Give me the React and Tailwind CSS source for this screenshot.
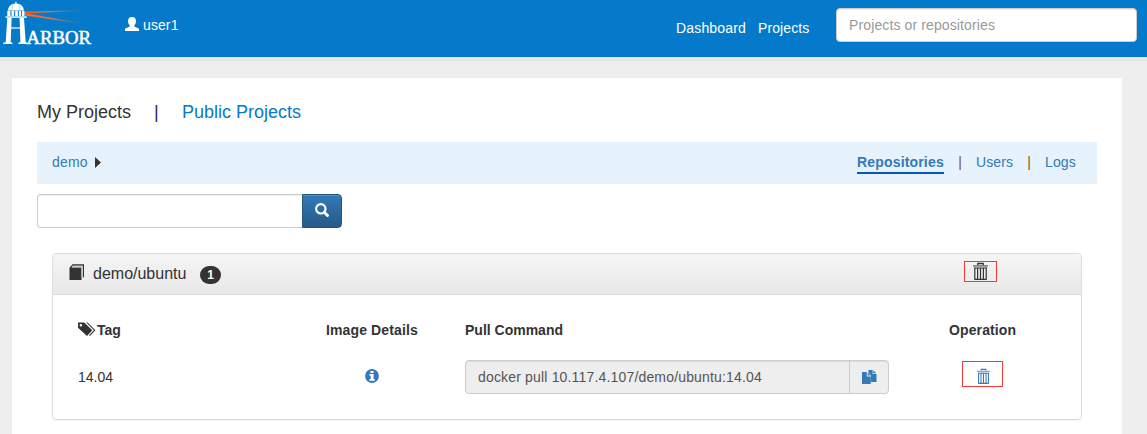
import React from "react";

function HarborLogo() {
  return (
    <svg width="92" height="48" viewBox="0 0 92 48" role="img" aria-label="Harbor">
      <defs>
        <linearGradient id="beam" gradientUnits="userSpaceOnUse" x1="25" x2="84" y1="0" y2="0">
          <stop offset="0" stopColor="#ff6422" />
          <stop offset="0.45" stopColor="#d27050" />
          <stop offset="1" stopColor="#6a7d98" stopOpacity="0.1" />
        </linearGradient>
      </defs>
      <path d="M25 11.800L84 10v.8L25 13.600z" fill="url(#beam)" />
      <path d="M25 12.900L82 23.200v.7L25 15.400z" fill="url(#beam)" />
      <g fill="#fff">
        <path d="M15.300 1.800h1.200v2.400h-1.200z" />
        <path d="M8 10.400C8 6.500 11.200 3.400 15.900 3.400s7.900 3.100 7.900 7z" />
        <path d="M7.300 10.800h3.100v5.200H7.300zM11.500 10.800h2.600v5.200h-2.600zM15.200 10.800h2.600v5.200h-2.600zM18.800 10.800h2.200v5.200h-2.200zM21.900 10.800h2.600v5.200h-2.600z" />
        <path d="M5.500 16.300h21.200v1.500H5.500z" />
        <path d="M7.300 18h4.300l-.9 24.200 1.700.6V44H3.200v-1.200l2.500-.6z" />
        <path d="M19.600 18h4.400l1.700 24.200 2.300.6V44h-9.700v-1.200l2.100-.6z" />
        <path d="M10.500 27.200h10.500v1.600H10.500z" opacity=".75" />
      </g>
      <path d="M12.900 5l-1 5.200M18.900 5l1 5.200" stroke="#057aca" strokeWidth=".6" opacity=".5" />
      <text x="26.500" y="43.700" textLength="64.500" lengthAdjust="spacingAndGlyphs" fill="#fff" stroke="#fff" strokeWidth=".5" fontSize="18.2" fontFamily="'Liberation Serif', serif">ARBOR</text>
    </svg>
  );
}

function UserIcon() {
  return (
    <svg width="14" height="14" viewBox="0 0 14 14" fill="currentColor">
      <path d="M7 0c2.700 0 4 1.600 4 4.100 0 1.900-.7 3.500-1.700 4.400v1l4 1.700c.5.200.7.500.7 1V14H0v-1.800c0-.5.2-.8.700-1l4-1.700v-1C3.700 7.600 3 6 3 4.100 3 1.600 4.300 0 7 0z" />
    </svg>
  );
}

function SearchIcon() {
  return (
    <svg width="14" height="14" viewBox="0 0 14 14" fill="none" stroke="currentColor">
      <circle cx="5.800" cy="5.800" r="4.700" strokeWidth="2.200" />
      <path d="M9.300 9.300l3.200 3.200" strokeWidth="2.900" strokeLinecap="round" />
    </svg>
  );
}

function BookIcon() {
  return (
    <svg width="16" height="17" viewBox="0 0 16 17" fill="currentColor">
      <path d="M.5 3.800L3.500.3H15v12.500l-1.200 1.300V2H4L2.700 3.500h9.800V16H.5z" />
      <path d="M3.900 1.500h9.800v12h-1.200V3.200H2.400z" fill="#c9c9c9" />
    </svg>
  );
}

function TagsIcon() {
  return (
    <svg width="18" height="15" viewBox="0 0 18 15" fill="currentColor">
      <path fillRule="evenodd" d="M0 .5h6.200l8.100 7.700L9 14 0 5.800zM2.900 2a1.300 1.300 0 1 0 0 2.600 1.300 1.300 0 0 0 0-2.600z" />
      <path d="M8.300.5h1.400l7.700 7.700-5.500 5.700-.9-.7 4.900-5z" />
    </svg>
  );
}

function InfoIcon() {
  return (
    <svg width="14" height="14" viewBox="0 0 14 14">
      <circle cx="7" cy="7" r="6.900" fill="#337ab7" />
      <path d="M5.500 2h3.100v2.100H5.500zM4.500 5h4.100v5h1.200v1.700H4.500V10h1.200V6.700H4.500z" fill="#fff" />
    </svg>
  );
}

function CopyIcon() {
  return (
    <svg width="15" height="15" viewBox="0 0 15 15">
      <path d="M6.400 0h4.200v4h3.900v8H9V5.600L6.400 2.600z" fill="#337ab7" />
      <path d="M11.300.3l2.900 3h-2.900z" fill="#337ab7" />
      <path d="M0 2h4.800v4.400h4V14H0z" fill="#337ab7" />
      <path d="M5.700 2.400l2.900 3.100H5.700z" fill="#337ab7" />
    </svg>
  );
}

function TrashIcon({ width, height }) {
  return (
    <svg width={width} height={height} viewBox="0 0 15 18" preserveAspectRatio="none" fill="none" stroke="currentColor">
      <path d="M4.800 2.900V1.500h5.400v1.400" strokeWidth="1.300" />
      <path d="M0 3.900h15" strokeWidth="1.500" opacity=".65" />
      <path d="M1.200 6h12.600M1.500 17.300h12" strokeWidth="1.200" />
      <path d="M1.800 5.500v12M13.200 5.500v12M4.600 6v11M7.500 6v11M10.400 6v11" strokeWidth="1.200" />
    </svg>
  );
}

function Header() {
  return (
    <header className="flex h-[57px] items-start bg-[#057aca] text-sm leading-5 text-white shadow-[0_4px_0_#e7e7e7]">
      <div className="w-[125px] shrink-0"><HarborLogo /></div>
      <div className="flex pt-[15px]">
        <span className="mt-[2px] mr-1"><UserIcon /></span>
        <span className="tracking-[0.1px]">user1</span>
      </div>
      <nav className="ml-auto flex gap-3 pt-[18px]">
        <a className="w-[70px] tracking-[0.17px] whitespace-nowrap">Dashboard</a>
        <a className="w-[51px] tracking-[0.1px] whitespace-nowrap">Projects</a>
      </nav>
      <input
        className="mt-2 mr-[10px] ml-[27px] h-[34px] w-[301px] rounded border border-[#ccc] bg-white px-3 text-sm tracking-[0.12px] text-[#555] shadow-[inset_0_1px_1px_rgba(0,0,0,0.075)] placeholder:text-[#999]"
        placeholder="Projects or repositories"
      />
    </header>
  );
}

function RepositoryPanel() {
  return (
    <section className="mx-[15px] mt-[25px] h-[167px] rounded border border-[#ddd] shadow-[0_1px_1px_rgba(0,0,0,0.05)]">
      <div className="flex h-[41px] items-start rounded-t-[3px] border-b border-[#ddd] bg-linear-to-b from-[#f5f5f5] to-[#e8e8e8] pl-4">
        <span className="mt-[10px]"><BookIcon /></span>
        <span className="mt-[9px] ml-2 w-[107px] text-base leading-[22px]">demo/ubuntu</span>
        <span className="mt-3 flex h-[18px] w-[21px] items-center justify-center rounded-full bg-[#333] text-xs font-bold text-white">1</span>
        <span className="mt-[7px] mr-[84px] ml-auto flex h-[21px] w-[33px] items-start justify-center border border-[#f43b3b]">
          <TrashIcon width={15} height={18} />
        </span>
      </div>
      <div className="grid grid-cols-[248px_139px_483px_1fr] pt-[25px] pl-[25px] leading-5">
        <div className="flex h-[47px] font-bold"><span className="mt-[2px] mr-px"><TagsIcon /></span>Tag</div>
        <div className="font-bold tracking-[0.12px]">Image Details</div>
        <div className="font-bold">Pull Command</div>
        <div className="pl-[1px] font-bold tracking-[0.12px]">Operation</div>
        <div>14.04</div>
        <div className="pt-[2px] pl-[39px]"><InfoIcon /></div>
        <div className="-mt-[7px] flex h-[34px] w-[424px] rounded border border-[#ccc] bg-[#eee] shadow-[inset_0_1px_1px_rgba(0,0,0,0.075)]">
          <span className="w-[383px] pt-[6px] pl-3 tracking-[0.17px] text-[#555]">docker pull 10.117.4.107/demo/ubuntu:14.04</span>
          <button className="flex grow items-start justify-center border-l border-[#ccc] pt-[9px]"><CopyIcon /></button>
        </div>
        <div className="-mt-[6px] ml-[14px] flex h-[26px] w-[41px] items-start justify-center border border-[#f43b3b] pt-[6px] pl-px text-[#337ab7]">
          <TrashIcon width={13} height={16} />
        </div>
      </div>
    </section>
  );
}

export default function App() {
  return (
    <div className="h-[434px] overflow-hidden bg-[#eee] font-['Liberation_Sans',Arial,sans-serif] text-sm text-[#333]">
      <Header />
      <main className="mt-[21px] mr-[25px] ml-3 h-[356px] bg-white px-[25px] pt-[22px]">
        <div className="flex h-[42px] text-lg leading-6">
          <span className="w-[117px]">My Projects</span>
          <span className="w-[28px] text-[#23236e]">|</span>
          <a className="text-[#057aca]">Public Projects</a>
        </div>
        <div className="flex h-[42px] items-start bg-[#e6f2fc] pt-[10px] pr-[21px] pl-[15px] leading-5 text-[#337ab7]">
          <a className="w-9 tracking-[0.2px]">demo</a>
          <svg className="mt-[5px] ml-[7px]" width="6" height="11" viewBox="0 0 6 11"><path d="M0 0l6 5.500L0 11z" fill="#333" /></svg>
          <a className="ml-auto h-[22px] w-[87px] border-b-2 border-[#0654bd] font-bold tracking-[0.17px]">Repositories</a>
          <span className="w-[32px] text-center text-[#80541f]">|</span>
          <a className="w-[37px] tracking-[0.1px]">Users</a>
          <span className="w-[32px] text-center text-[#80541f]">|</span>
          <a className="w-[31px] tracking-[0.1px]">Logs</a>
        </div>
        <div className="mt-[10px] flex">
          <input aria-label="Filter repositories" className="h-[34px] w-[265px] rounded-l border border-r-0 border-[#ccc] px-3 shadow-[inset_0_1px_1px_rgba(0,0,0,0.075)]" />
          <button aria-label="Search" className="flex h-[34px] w-10 items-start justify-center rounded-r border border-[#245580] bg-linear-to-b from-[#337ab7] to-[#265a88] pt-2 text-white shadow-[inset_0_1px_0_rgba(255,255,255,0.15)]"><SearchIcon /></button>
        </div>
        <RepositoryPanel />
      </main>
    </div>
  );
}
